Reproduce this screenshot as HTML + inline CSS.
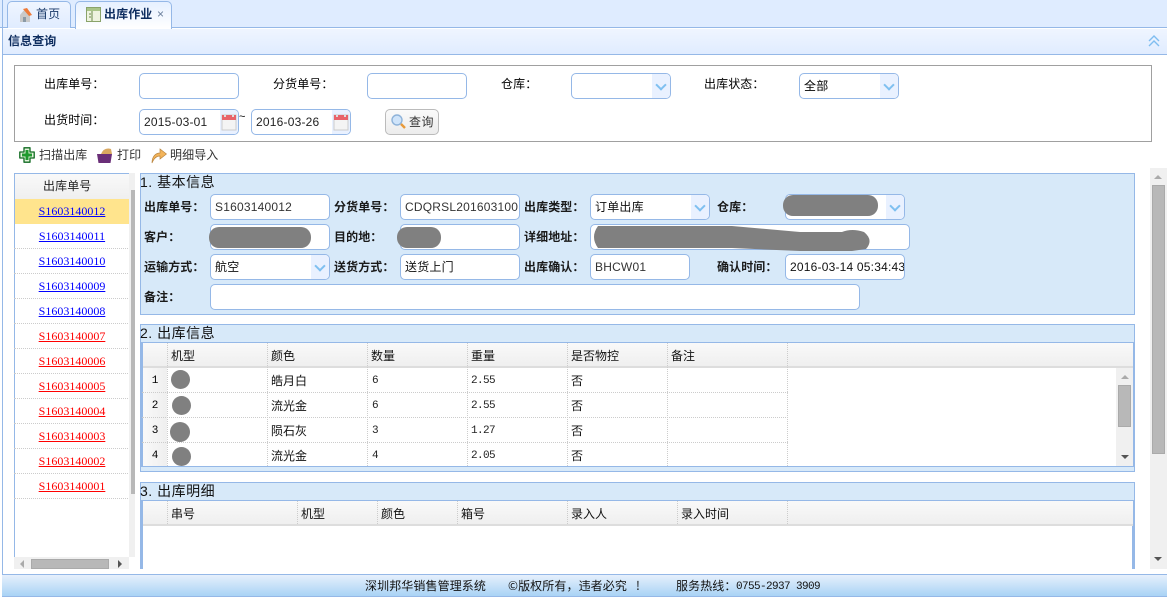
<!DOCTYPE html>
<html lang="zh"><head><meta charset="utf-8"><style>
*{box-sizing:border-box}
html,body{margin:0;padding:0;width:1167px;height:597px;overflow:hidden;background:#fff}
body{position:relative;font:12px/16px "Liberation Sans","WenQuanYi Zen Hei","Noto Sans CJK SC",sans-serif;color:#000}
div,span,a,svg{position:absolute;white-space:nowrap}
.in{background:#fff;border:1px solid #95b8e7;border-radius:5px;height:26px;overflow:hidden;color:#333;padding:4px 3px 4px 4px;line-height:16px;letter-spacing:.2px}
.ar{right:0;top:0;bottom:0;width:18px;background:#e9f1ff}
.ar:after{content:"";position:absolute;left:5px;top:7px;width:6px;height:6px;border:solid #7fc0f0;border-width:0 2px 2px 0;transform:rotate(45deg)}
.ca{right:0;top:0;bottom:0;width:18px;background:#e9f1ff}
.l{font-family:"WenQuanYi Zen Hei","Noto Sans CJK SC",sans-serif;letter-spacing:.1px}
.b{font-weight:bold;color:#1a1a1a}
.lk{left:14px;width:116px;text-align:center;font:12px/16px "Liberation Serif",serif;text-decoration:underline;color:#00f;height:25px;padding-top:4px;border-bottom:1px dotted #ccc}
.r{color:#f00}
.sec{left:140px;width:995px;background:#d7e9f9;border:1px solid #95b8e7}
.t{left:140px;width:60px;font-size:14px;line-height:16px;color:#111;letter-spacing:.5px}
.hd{background:linear-gradient(#f9f9f9,#efefef);border-bottom:2px solid #ddd;height:25px}
.vd{width:0;border-left:1px dotted #ccc}
.hl{height:0;border-top:1px dotted #ccc}
.blob{background:#808080}
.sb{background:#f0f0f0}
.th{background:#b8b8b8;border:1px solid #aaa}
.up{width:0;height:0;border:4px solid transparent;border-top:0;border-bottom:4px solid #aaa}
.dn{width:0;height:0;border:4px solid transparent;border-bottom:0;border-top:4px solid #555}
.rn{left:143px;width:24px;height:25px;background:linear-gradient(90deg,#f9f9f9,#efefef);text-align:center;padding-top:5px;font-family:"Liberation Mono",monospace;font-size:11px}
.c{font-size:12px;color:#111}
.m{font-family:"Liberation Mono",monospace;font-size:11px;letter-spacing:-.6px;color:#222}
</style></head><body>

<!-- tab bar -->
<div style="left:0;top:0;width:1167px;height:28px;background:#dfecff;border-bottom:1px solid #95b8e7"></div>
<div style="left:2px;top:0;width:1px;height:575px;background:#95b8e7"></div>
<div style="left:7px;top:1px;width:64px;height:27px;background:linear-gradient(#eff5ff,#e0ecff);border:1px solid #95b8e7;border-bottom:0;border-radius:5px 5px 0 0"></div>
<svg style="left:17px;top:7px" width="16" height="16" viewBox="0 0 16 16"><path d="M3 8 L8 2 L13 8 V15 H3Z" fill="#c9c9c9"/><path d="M6 2 L10 1 L15 8 L12 9Z" fill="#ee7b3a"/><rect x="6" y="10" width="3" height="5" fill="#8a9aa6"/></svg>
<div class="l" style="left:36px;top:6px;font-size:12px;color:#1a3a6a">首页</div>
<div style="left:75px;top:1px;width:97px;height:28px;background:linear-gradient(#e6f0ff,#fff);border:1px solid #95b8e7;border-bottom:0;border-radius:5px 5px 0 0"></div>
<svg style="left:86px;top:7px" width="15" height="15" viewBox="0 0 15 15"><rect x=".5" y=".5" width="14" height="14" fill="#eef3df" stroke="#8aa36a"/><rect x="1" y="1" width="13" height="3" fill="#a9c488"/><path d="M6 4V14M3 7H5M3 10H5" stroke="#6b8a4a"/></svg>
<div class="l" style="left:104px;top:6px;font-weight:bold;color:#0e2d5f">出库作业</div>
<div style="left:157px;top:6px;color:#6a7f9c;font-size:12px">×</div>

<!-- panel header -->
<div style="left:3px;top:29px;width:1164px;height:26px;background:linear-gradient(#eff5ff,#e0ecff);border-bottom:1px solid #95b8e7"></div>
<div class="l" style="left:8px;top:33px;font-weight:bold;color:#0e2d5f">信息查询</div>
<svg style="left:1148px;top:35px" width="12" height="12" viewBox="0 0 12 12"><path d="M1 6L6 1L11 6M1 11L6 6L11 11" fill="none" stroke="#7fbdf0" stroke-width="1.4"/></svg>

<!-- form box -->
<div style="left:14px;top:65px;width:1138px;height:77px;border:1px solid #a0a0a0"></div>
<div class="l" style="left:44px;top:76px">出库单号：</div>
<div class="in" style="left:139px;top:73px;width:100px"></div>
<div class="l" style="left:273px;top:76px">分货单号：</div>
<div class="in" style="left:367px;top:73px;width:100px"></div>
<div class="l" style="left:501px;top:76px">仓库：</div>
<div class="in" style="left:571px;top:73px;width:100px"><span class="ar"></span></div>
<div class="l" style="left:704px;top:76px">出库状态：</div>
<div class="in" style="left:799px;top:73px;width:100px;color:#000">全部<span class="ar"></span></div>
<div class="l" style="left:44px;top:112px">出货时间：</div>
<div class="in" style="left:139px;top:109px;width:100px;color:#222">2015-03-01<span class="ca"></span></div>
<div class="in" style="left:251px;top:109px;width:100px;color:#222">2016-03-26<span class="ca"></span></div>
<svg style="left:221px;top:113px" width="16" height="18" viewBox="0 0 16 18"><rect x="1" y="2" width="14" height="15" fill="#f4f4f4" stroke="#ccc"/><rect x="1" y="2" width="14" height="5" fill="#e8636a"/><rect x="3" y="1" width="2" height="3" fill="#ddd"/><rect x="11" y="1" width="2" height="3" fill="#ddd"/></svg>
<svg style="left:333px;top:113px" width="16" height="18" viewBox="0 0 16 18"><rect x="1" y="2" width="14" height="15" fill="#f4f4f4" stroke="#ccc"/><rect x="1" y="2" width="14" height="5" fill="#e8636a"/><rect x="3" y="1" width="2" height="3" fill="#ddd"/><rect x="11" y="1" width="2" height="3" fill="#ddd"/></svg>
<div style="left:239px;top:109px;font-size:11px">~</div>
<div style="left:385px;top:109px;width:54px;height:26px;border:1px solid #bbb;border-radius:5px;background:linear-gradient(#fafafa,#ececec)"></div>
<svg style="left:390px;top:113px" width="17" height="17" viewBox="0 0 17 17"><circle cx="7" cy="7" r="5" fill="#cfe4fa" stroke="#8fb3d9" stroke-width="1.4"/><path d="M11 11L15 15" stroke="#e89a3a" stroke-width="2.4"/></svg>
<div class="l" style="left:409px;top:114px;color:#333;letter-spacing:.5px">查询</div>

<!-- toolbar -->
<svg style="left:19px;top:147px" width="16" height="16" viewBox="0 0 16 16"><path d="M5 .8H11V5H15.200V11H11V15.200H5V11H.8V5H5Z" fill="#e4f4dc" stroke="#0f6a20" stroke-width="1.300" stroke-linejoin="round"/><path d="M6.500 3H9.500V6.500H13V9.500H9.500V13H6.500V9.500H3V6.500H6.500Z" fill="#1f9a2e"/></svg>
<div class="l" style="left:39px;top:147px;color:#333">扫描出库</div>
<svg style="left:96px;top:147px" width="17" height="17" viewBox="0 0 17 17"><path d="M1 7H16L14.500 16H2.500Z" fill="#6a2f78"/><path d="M5 7Q8 0 15 2L16 7Z" fill="#d9a860"/></svg>
<div class="l" style="left:117px;top:147px;color:#333">打印</div>
<svg style="left:151px;top:147px" width="16" height="17" viewBox="0 0 16 17"><path d="M1 16C1 9 5 6 9 6V2L15.500 7L9 12V9C6 9 3 11 1 16Z" fill="#f3b45a" stroke="#b98540" stroke-width=".7"/></svg>
<div class="l" style="left:170px;top:147px;color:#333">明细导入</div>

<!-- left list -->
<div style="left:14px;top:173px;width:1px;height:396px;background:#95b8e7"></div>
<div style="left:14px;top:173px;width:116px;height:1px;background:#95b8e7"></div>
<div style="left:15px;top:174px;width:114px;height:25px;background:linear-gradient(#f9f9f9,#efefef)"></div>
<div class="l" style="left:43px;top:178px;color:#222">出库单号</div>
<div style="left:15px;top:199px;width:114px;height:25px;background:#ffe48d"></div>
<a class="lk" style="top:199px;border:0">S1603140012</a>
<a class="lk" style="top:224px">S1603140011</a>
<a class="lk" style="top:249px">S1603140010</a>
<a class="lk" style="top:274px">S1603140009</a>
<a class="lk" style="top:299px">S1603140008</a>
<a class="lk r" style="top:324px">S1603140007</a>
<a class="lk r" style="top:349px">S1603140006</a>
<a class="lk r" style="top:374px">S1603140005</a>
<a class="lk r" style="top:399px">S1603140004</a>
<a class="lk r" style="top:424px">S1603140003</a>
<a class="lk r" style="top:449px">S1603140002</a>
<a class="lk r" style="top:474px">S1603140001</a>
<div class="sb" style="left:129px;top:173px;width:6px;height:384px"></div>
<div style="left:131px;top:190px;width:4px;height:304px;background:#b8b8b8"></div>
<div class="sb" style="left:14px;top:557px;width:115px;height:12px"></div>
<div class="th" style="left:31px;top:559px;width:78px;height:10px"></div>
<div style="left:20px;top:560px;width:0;height:0;border:4px solid transparent;border-left:0;border-right:4px solid #aaa"></div>
<div style="left:118px;top:560px;width:0;height:0;border:4px solid transparent;border-right:0;border-left:4px solid #555"></div>

<!-- section 1 -->
<div class="sec" style="top:173px;height:142px"></div>
<div class="t" style="top:174px;width:90px">1. 基本信息</div>

<div class="l b" style="left:144px;top:199px">出库单号：</div>
<div class="in" style="left:210px;top:194px;width:120px">S1603140012</div>
<div class="l b" style="left:334px;top:199px">分货单号：</div>
<div class="in" style="left:400px;top:194px;width:120px">CDQRSL20160310012</div>
<div class="l b" style="left:524px;top:199px">出库类型：</div>
<div class="in" style="left:590px;top:194px;width:120px;color:#111">订单出库<span class="ar"></span></div>
<div class="l b" style="left:717px;top:199px">仓库：</div>
<div class="in" style="left:785px;top:194px;width:120px"><span class="ar"></span></div>

<div class="l b" style="left:144px;top:229px">客户：</div>
<div class="in" style="left:210px;top:224px;width:120px"></div>
<div class="l b" style="left:334px;top:229px">目的地：</div>
<div class="in" style="left:400px;top:224px;width:120px"></div>
<div class="l b" style="left:524px;top:229px">详细地址：</div>
<div class="in" style="left:590px;top:224px;width:320px"></div>

<div class="l b" style="left:144px;top:259px">运输方式：</div>
<div class="in" style="left:210px;top:254px;width:120px;color:#111">航空<span class="ar"></span></div>
<div class="l b" style="left:334px;top:259px">送货方式：</div>
<div class="in" style="left:400px;top:254px;width:120px;color:#111">送货上门</div>
<div class="l b" style="left:524px;top:259px">出库确认：</div>
<div class="in" style="left:590px;top:254px;width:100px">BHCW01</div>
<div class="l b" style="left:717px;top:259px">确认时间：</div>
<div class="in" style="left:785px;top:254px;width:120px;color:#111">2016-03-14 05:34:43</div>

<div class="l b" style="left:144px;top:289px">备注：</div>
<div class="in" style="left:210px;top:284px;width:650px"></div>

<!-- redactions -->
<div class="blob" style="left:783px;top:195px;width:95px;height:21px;border-radius:10px"></div>
<div class="blob" style="left:209px;top:227px;width:102px;height:21px;border-radius:10px"></div>
<div class="blob" style="left:397px;top:227px;width:44px;height:21px;border-radius:10px"></div>
<svg style="left:592px;top:225px" width="285" height="32" viewBox="0 0 285 32"><path d="M6 1H140L208 7H250Q260 3 272 7Q282 15 274 24L260 26H208L140 23H6Q-2 12 6 1Z" fill="#808080"/></svg>

<!-- section 2 -->
<div class="sec" style="top:324px;height:148px"></div>
<div class="t" style="top:325px;width:90px">2. 出库信息</div>
<div style="left:141px;top:342px;width:993px;height:125px;background:#fff;border:solid #95b8e7;border-width:1px 2px 1px 2px"></div>
<div class="hd" style="left:143px;top:343px;width:990px"></div>
<div class="c" style="left:171px;top:348px">机型</div>
<div class="c" style="left:271px;top:348px">颜色</div>
<div class="c" style="left:371px;top:348px">数量</div>
<div class="c" style="left:471px;top:348px">重量</div>
<div class="c" style="left:571px;top:348px">是否物控</div>
<div class="c" style="left:671px;top:348px">备注</div>
<div class="rn" style="top:368px">1</div><div class="rn" style="top:393px">2</div><div class="rn" style="top:418px">3</div><div class="rn" style="top:443px;height:23px">4</div>
<div class="vd" style="left:167px;top:343px;height:123px"></div>
<div class="vd" style="left:267px;top:343px;height:123px"></div>
<div class="vd" style="left:367px;top:343px;height:123px"></div>
<div class="vd" style="left:467px;top:343px;height:123px"></div>
<div class="vd" style="left:567px;top:343px;height:123px"></div>
<div class="vd" style="left:667px;top:343px;height:123px"></div>
<div class="vd" style="left:787px;top:343px;height:123px"></div>
<div class="hl" style="left:142px;top:392px;width:646px"></div>
<div class="hl" style="left:142px;top:417px;width:646px"></div>
<div class="hl" style="left:142px;top:442px;width:646px"></div>
<div class="blob" style="left:171px;top:370px;width:19px;height:19px;border-radius:50%"></div>
<div class="blob" style="left:172px;top:396px;width:19px;height:19px;border-radius:50%"></div>
<div class="blob" style="left:170px;top:422px;width:20px;height:20px;border-radius:50%"></div>
<div class="blob" style="left:172px;top:447px;width:19px;height:19px;border-radius:50%"></div>
<div class="c" style="left:271px;top:373px">皓月白</div><div class="m" style="left:372px;top:373px">6</div><div class="m" style="left:471px;top:373px">2.55</div><div class="c" style="left:571px;top:373px">否</div>
<div class="c" style="left:271px;top:398px">流光金</div><div class="m" style="left:372px;top:398px">6</div><div class="m" style="left:471px;top:398px">2.55</div><div class="c" style="left:571px;top:398px">否</div>
<div class="c" style="left:271px;top:423px">陨石灰</div><div class="m" style="left:372px;top:423px">3</div><div class="m" style="left:471px;top:423px">1.27</div><div class="c" style="left:571px;top:423px">否</div>
<div class="c" style="left:271px;top:448px">流光金</div><div class="m" style="left:372px;top:448px">4</div><div class="m" style="left:471px;top:448px">2.05</div><div class="c" style="left:571px;top:448px">否</div>
<div class="sb" style="left:1116px;top:368px;width:17px;height:98px"></div>
<div class="up" style="left:1121px;top:375px"></div>
<div class="th" style="left:1118px;top:385px;width:13px;height:42px"></div>
<div class="dn" style="left:1121px;top:455px"></div>

<!-- section 3 -->
<div class="sec" style="top:482px;height:87px;border-bottom:0"></div>
<div class="t" style="top:483px;width:90px">3. 出库明细</div>
<div style="left:141px;top:500px;width:993px;height:69px;background:#fff;border:solid #95b8e7;border-width:1px 2px 0 2px"></div>
<div class="hd" style="left:143px;top:501px;width:990px"></div>
<div class="c" style="left:171px;top:506px">串号</div>
<div class="c" style="left:301px;top:506px">机型</div>
<div class="c" style="left:381px;top:506px">颜色</div>
<div class="c" style="left:461px;top:506px">箱号</div>
<div class="c" style="left:571px;top:506px">录入人</div>
<div class="c" style="left:681px;top:506px">录入时间</div>
<div class="vd" style="left:167px;top:501px;height:23px"></div>
<div class="vd" style="left:297px;top:501px;height:23px"></div>
<div class="vd" style="left:377px;top:501px;height:23px"></div>
<div class="vd" style="left:457px;top:501px;height:23px"></div>
<div class="vd" style="left:567px;top:501px;height:23px"></div>
<div class="vd" style="left:677px;top:501px;height:23px"></div>
<div class="vd" style="left:787px;top:501px;height:23px"></div>

<!-- main scrollbar -->
<div class="sb" style="left:1150px;top:168px;width:17px;height:401px"></div>
<div class="up" style="left:1154px;top:175px"></div>
<div class="th" style="left:1152px;top:185px;width:13px;height:269px"></div>
<div class="dn" style="left:1154px;top:557px"></div>

<!-- footer -->
<div style="left:2px;top:574px;width:1165px;height:23px;background:linear-gradient(#e6f0fc,#a9d3f5);border-top:1px solid #95b8e7;border-bottom:1px solid #95b8e7"></div>
<div class="l" style="left:365px;top:578px;color:#111">深圳邦华销售管理系统</div>
<div class="l" style="left:508px;top:578px;color:#111">©版权所有，违者必究</div>
<div class="l" style="left:636px;top:578px;color:#111">!</div>
<div class="l" style="left:676px;top:578px;color:#111">服务热线：</div>
<div class="m" style="left:736px;top:579px;color:#111">0755-2937 3909</div>
</body></html>
